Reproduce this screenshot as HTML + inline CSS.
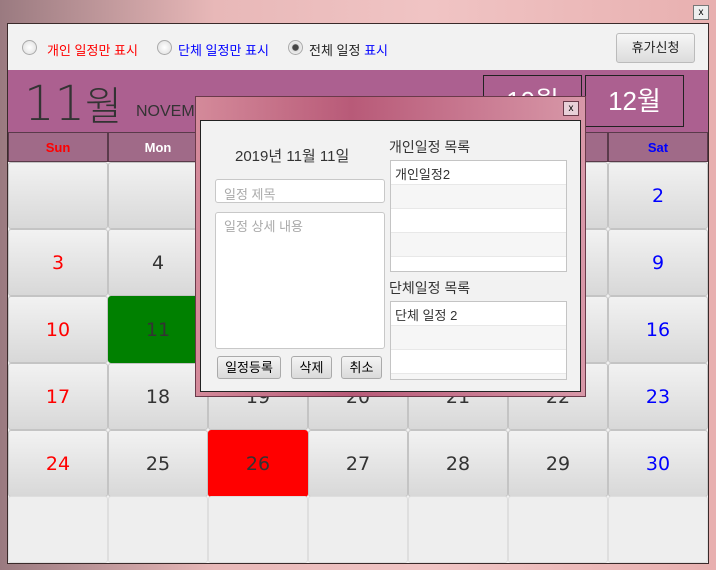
<!DOCTYPE html><html><head><meta charset="utf-8"><style>
*{margin:0;padding:0;box-sizing:border-box}
body{width:716px;height:570px;overflow:hidden;position:relative;font-family:"Liberation Sans","Noto Sans CJK KR",sans-serif;background:linear-gradient(90deg,#9a7a80,#e8b8b8 30%,#f0c4c4 60%,#e8b0b0);}
.abs{position:absolute}
.win{left:7px;top:23px;width:702px;height:541px;border:1px solid #3a2a2a;background:#f2f2f2}
.top{left:8px;top:24px;width:700px;height:46px;background:#f2f2f2}
.rad{width:15px;height:15px;border-radius:50%;border:1px solid #aaa;background:radial-gradient(#fff,#ddd);top:40px}
.lbl{top:40px;font-size:13px}
.hdr{left:8px;top:70px;width:700px;height:62px;background:#ac6090}
.dh{top:132px;height:30px;width:100px;background:#a06a88;border:1px solid #5a3a4a;font-weight:bold;font-size:13px;color:#fff;text-align:center;line-height:30px}
.c{width:100px;height:67px;border:1px solid #c4c4c4;border-radius:3px;background:linear-gradient(#f2f2f2,#d8d8d8);text-align:center;font-size:19px;font-family:"DejaVu Sans",sans-serif;color:#333;display:flex;align-items:center;justify-content:center}
.e{background:#eeeeee;border-color:#dedede}
.mb{border:1px solid #222;width:99px;height:52px;color:#fff;font-size:26px;text-align:center;line-height:50px}
</style></head><body>
<div class="abs" style="left:693px;top:5px;width:16px;height:15px;border:1px solid #777;background:#eee;font-size:10px;text-align:center;line-height:13px">x</div>
<div class="abs win"></div>
<div class="abs top"></div>
<div class="abs rad" style="left:22px"></div><div class="abs lbl" style="left:47px;color:#f00">개인 일정만 표시</div>
<div class="abs rad" style="left:157px"></div><div class="abs lbl" style="left:178px;color:#00f">단체 일정만 표시</div>
<div class="abs rad" style="left:288px;background:radial-gradient(#444 30%,#ddd 40%,#fff)"></div><div class="abs lbl" style="left:309px;color:#222">전체 일정 <span style="color:#00f">표시</span></div>
<div class="abs" style="left:616px;top:33px;width:79px;height:30px;border:1px solid #bbb;border-radius:3px;background:linear-gradient(#f6f6f6,#dcdcdc);font-size:13px;text-align:center;line-height:28px;color:#222">휴가신청</div>
<div class="abs hdr"></div>
<div class="abs" style="left:24px;top:74px;font-size:48px;color:#333;font-family:'DejaVu Sans','Noto Sans CJK KR',sans-serif;font-weight:300">11<span style="font-size:40px;font-family:'Noto Sans CJK KR',sans-serif">월</span></div>
<div class="abs" style="left:136px;top:103px;font-size:16px;color:#333">NOVEMBER 2019</div>
<div class="abs mb" style="left:483px;top:75px">10월</div>
<div class="abs mb" style="left:585px;top:75px">12월</div>
<div id="g"></div>
<script>
var d=['Sun','Mon','Tue','Wed','Thu','Fri','Sat'],h='';
for(var i=0;i<7;i++)h+='<div class="abs dh" style="left:'+(8+i*100)+'px;color:'+(i==0?'#f00':i==6?'#00f':'#fff')+'">'+d[i]+'</div>';
var ys=[162,229,296,363,430,496];
for(var r=0;r<6;r++)for(var c=0;c<7;c++){var n=r*7+c-4;var t=(n>=1&&n<=30)?n:'';var cl='c'+(r==5?' e':'');var st='left:'+(8+c*100)+'px;top:'+ys[r]+'px;';
if(c==0)st+='color:#f00;';if(c==6)st+='color:#00f;';if(n==11)st+='background:#008000;border-color:#008000;';if(n==26)st+='background:#f00;border-color:#f00;color:#333;';
h+='<div class="abs '+cl+'" style="'+st+'">'+t+'</div>';}
document.getElementById('g').innerHTML=h;
</script>
<div class="abs" style="left:195px;top:96px;width:391px;height:301px;border:1px solid #6a3a4a;background:linear-gradient(90deg,#d48a9a,#b85a78 40%,#c87890 70%,#d898a8);"></div>
<div class="abs" style="left:563px;top:101px;width:16px;height:15px;border:1px solid #6a3a4a;background:#e8d0d8;font-size:10px;text-align:center;line-height:13px">x</div>
<div class="abs" style="left:200px;top:120px;width:381px;height:272px;border:1px solid #222;background:#f2f2f2"></div>
<div class="abs" style="left:235px;top:145px;font-size:15px;color:#333">2019년 11월 11일</div>
<div class="abs" style="left:215px;top:179px;width:170px;height:24px;border:1px solid #c8c8c8;border-radius:3px;background:#fff;font-size:13px;color:#aaa;padding:4px 8px">일정 제목</div>
<div class="abs" style="left:215px;top:212px;width:170px;height:137px;border:1px solid #c8c8c8;border-radius:3px;background:#fff;font-size:13px;color:#aaa;padding:3px 8px">일정 상세 내용</div>
<div class="abs" style="left:217px;top:356px;width:64px;height:23px;border:1px solid #aaa;border-radius:3px;background:linear-gradient(#f4f4f4,#dadada);font-size:13px;text-align:center;line-height:21px">일정등록</div>
<div class="abs" style="left:291px;top:356px;width:41px;height:23px;border:1px solid #aaa;border-radius:3px;background:linear-gradient(#f4f4f4,#dadada);font-size:13px;text-align:center;line-height:21px">삭제</div>
<div class="abs" style="left:341px;top:356px;width:41px;height:23px;border:1px solid #aaa;border-radius:3px;background:linear-gradient(#f4f4f4,#dadada);font-size:13px;text-align:center;line-height:21px">취소</div>
<div class="abs" style="left:389px;top:137px;font-size:14px;color:#333">개인일정 목록</div>
<div class="abs" style="left:390px;top:160px;width:177px;height:112px;border:1px solid #c4c4c4;background:repeating-linear-gradient(#fff 0 23px,#e8e8e8 23px 24px,#f6f6f6 24px 47px,#e8e8e8 47px 48px)"><div style="font-size:13px;padding:3px 4px;color:#333">개인일정2</div></div>
<div class="abs" style="left:389px;top:278px;font-size:14px;color:#333">단체일정 목록</div>
<div class="abs" style="left:390px;top:301px;width:177px;height:79px;border:1px solid #c4c4c4;background:repeating-linear-gradient(#fff 0 23px,#e8e8e8 23px 24px,#f6f6f6 24px 47px,#e8e8e8 47px 48px)"><div style="font-size:13px;padding:3px 4px;color:#333">단체 일정 2</div></div>
</body></html>
